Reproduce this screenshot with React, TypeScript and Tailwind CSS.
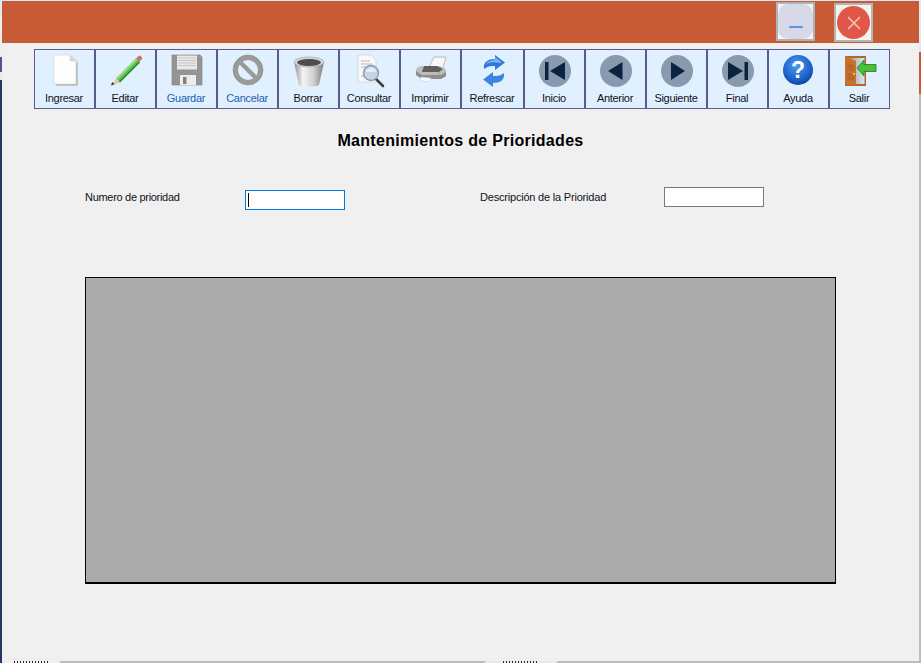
import React from 'react';

const Ic = ({ children }: { children: React.ReactNode }) => (
  <svg width="34" height="34" viewBox="0 0 34 34" className="mt-[4px] shrink-0">
    {children}
  </svg>
);

const DocIcon = () => (
  <Ic>
    <path d="M7 2h16l6 6v23H7z" fill="#b9b9b9" transform="translate(.8 .8)" />
    <path d="M6 1h16l6 6v23H6z" fill="#fdfdfd" stroke="#d4d4d4" strokeWidth=".6" />
    <path d="M22 1v6h6z" fill="#dcdcdc" stroke="#c4c4c4" strokeWidth=".5" />
  </Ic>
);

const PencilIcon = () => (
  <Ic>
    <path d="M7 24.5l20-20 4 4-20 20z" fill="#58b94e" />
    <path d="M7 24.5l20-20 1.6 1.6-20 20z" fill="#8fdc7c" />
    <path d="M10 27.5l20-20 1 1-20 20z" fill="#2b8a2f" />
    <path d="M7 24.5l4 4-8 2.500z" fill="#e6c79a" />
    <path d="M2 31.500l1.200-3.600 2.400 2.400z" fill="#333" />
    <path d="M27 4.500l2.500-2.500a1.500 1.500 0 0 1 2 0l1.200 1.200a1.500 1.500 0 0 1 0 2l-2.700 2.800z" fill="#c9746a" />
  </Ic>
);

const FloppyIcon = () => (
  <Ic>
    <path d="M2 1h28l2 2v28H2z" fill="#949494" stroke="#7c7c7c" strokeWidth=".6" />
    <rect x="7" y="1.500" width="20" height="14" fill="#e8e8e8" />
    <path d="M8 4h18M8 6.500h18M8 9h18M8 11.500h18" stroke="#c6c6c6" strokeWidth="1" />
    <rect x="10" y="21" width="16" height="10" fill="#ececec" />
    <rect x="13" y="23" width="3.500" height="7" fill="#808080" />
  </Ic>
);

const NoIcon = () => (
  <Ic>
    <circle cx="17" cy="16" r="12.500" fill="none" stroke="#9a9a9a" strokeWidth="5" />
    <path d="M8.500 7.500l17 17" stroke="#9a9a9a" strokeWidth="4.500" />
    <circle cx="17" cy="16" r="15" fill="none" stroke="#808080" strokeWidth=".5" />
  </Ic>
);

const TrashIcon = () => (
  <Ic>
    <defs>
      <linearGradient id="bin" x1="0" x2="1" y1="0" y2="0">
        <stop offset="0" stopColor="#8f8f8f" />
        <stop offset=".3" stopColor="#f4f4f4" />
        <stop offset=".65" stopColor="#d0d0d0" />
        <stop offset="1" stopColor="#7c7c7c" />
      </linearGradient>
    </defs>
    <path d="M2 8l5 23c2 2 18 2 20 0l5-23z" fill="url(#bin)" />
    <ellipse cx="17" cy="8" rx="15" ry="5" fill="#d8d8d8" stroke="#999" strokeWidth=".6" />
    <ellipse cx="17" cy="8.500" rx="12" ry="3.500" fill="#4d4d4d" />
  </Ic>
);

const SearchDocIcon = () => (
  <Ic>
    <path d="M5 1h13l5 5v22H5z" fill="#f8f8f8" stroke="#cfcfcf" strokeWidth=".7" />
    <path d="M8 7h9M8 10h12M8 13h5M8 22h3" stroke="#b8b8c4" strokeWidth="1" />
    <path d="M23 25l7 7" stroke="#3f3f3f" strokeWidth="2.600" strokeLinecap="round" />
    <circle cx="18" cy="19" r="7.500" fill="#bcd2ea" fillOpacity=".9" stroke="#8d9aa8" strokeWidth="1.400" />
    <path d="M13 18a5 4 0 0 1 10 0" fill="#e4eef9" />
  </Ic>
);

const PrinterIcon = () => (
  <Ic>
    <path d="M14 15l6-12h12l-4 14z" fill="#f8f8f8" stroke="#a4a4a4" strokeWidth=".7" />
    <path d="M2 16c1-3 3-4 7-4h14c3 0 7 1 9 4v6l-5 3H8l-6-4z" fill="#bdbdbd" />
    <path d="M10 12h13l6 3-4 3H8z" fill="#5f5f5f" />
    <path d="M2 17l6 4h19l5-3v4l-5 3H8l-6-4z" fill="#8d8d8d" />
    <path d="M7 23l10 1-2 4-9-1.500z" fill="#fafafa" stroke="#c4c4c4" strokeWidth=".5" />
    <circle cx="25" cy="19.500" r="1" fill="#5bd05b" />
  </Ic>
);

const RefreshIcon = () => (
  <Ic>
    <path d="M8 15c-1-7 4-10 11-10V1l10 7.500-10 7.500v-4c-5 0-8 .5-11 3z" fill="#2f78d8" />
    <path d="M28 19c1 7-4 10-11 10v4L7 25.500l10-7.500v4c5 0 8-.5 11-3z" fill="#3c86e2" />
    <path d="M10 10c2-3 5-4 9-4V3l7 5.500-3 .5c-4-1-9-1-13 1z" fill="#7db4f2" />
  </Ic>
);

const NavIcon = ({ glyph }: { glyph: 'first' | 'prev' | 'next' | 'last' }) => (
  <Ic>
    <circle cx="17" cy="17" r="16" fill="#8a9aae" />
    {glyph === 'first' && (
      <>
        <rect x="7" y="8" width="3.500" height="18" fill="#0a2340" />
        <path d="M27 8v18L12 17z" fill="#0a2340" />
      </>
    )}
    {glyph === 'prev' && <path d="M23.500 8v18L9 17z" fill="#0a2340" />}
    {glyph === 'next' && <path d="M11 8v18l14-9z" fill="#0a2340" />}
    {glyph === 'last' && (
      <>
        <path d="M7 8v18l15-9z" fill="#0a2340" />
        <rect x="23.500" y="8" width="3.500" height="18" fill="#0a2340" />
      </>
    )}
  </Ic>
);

const HelpIcon = () => (
  <Ic>
    <defs>
      <radialGradient id="help" cx=".45" cy=".35" r=".7">
        <stop offset="0" stopColor="#4f9cf0" />
        <stop offset=".7" stopColor="#1a5fc8" />
        <stop offset="1" stopColor="#0c3a8e" />
      </radialGradient>
    </defs>
    <circle cx="16" cy="16" r="15" fill="url(#help)" />
    <text x="16" y="24" textAnchor="middle" fontFamily="'Liberation Sans', sans-serif" fontWeight="700" fontSize="23" fill="#fff">
      ?
    </text>
  </Ic>
);

const ExitIcon = () => (
  <Ic>
    <defs>
      <linearGradient id="room" x1="0" x2="1" y1="0" y2="0">
        <stop offset="0" stopColor="#8f9ca4" />
        <stop offset="1" stopColor="#e2e8ea" />
      </linearGradient>
    </defs>
    <path d="M2 2h21v30H2z" fill="#b5662c" />
    <path d="M5 4h16.500v26H5z" fill="url(#room)" />
    <path d="M2 2l11 5v25l-11-2z" fill="#c8712c" />
    <path d="M4 9l7 2.500v6l-7-1.500zM4 19l7 1v7l-7-1.500z" fill="#b9662a" />
    <circle cx="11" cy="20" r=".9" fill="#f0d890" />
    <path d="M14 14l7-8v4.500h12v7H21v4.500z" fill="#48c038" stroke="#1f7a1f" strokeWidth=".8" />
  </Ic>
);

const tools = [
  { label: 'Ingresar', w: 'w-[61px]', icon: <DocIcon /> },
  { label: 'Editar', w: 'w-[61px]', icon: <PencilIcon /> },
  { label: 'Guardar', w: 'w-[61px]', icon: <FloppyIcon />, off: true },
  { label: 'Cancelar', w: 'w-[61px]', icon: <NoIcon />, off: true },
  { label: 'Borrar', w: 'w-[61px]', icon: <TrashIcon /> },
  { label: 'Consultar', w: 'w-[61px]', icon: <SearchDocIcon /> },
  { label: 'Imprimir', w: 'w-[61px]', icon: <PrinterIcon /> },
  { label: 'Refrescar', w: 'w-[63px]', icon: <RefreshIcon /> },
  { label: 'Inicio', w: 'w-[61px]', icon: <NavIcon glyph="first" /> },
  { label: 'Anterior', w: 'w-[61px]', icon: <NavIcon glyph="prev" /> },
  { label: 'Siguiente', w: 'w-[61px]', icon: <NavIcon glyph="next" /> },
  { label: 'Final', w: 'w-[61px]', icon: <NavIcon glyph="last" /> },
  { label: 'Ayuda', w: 'w-[61px]', icon: <HelpIcon /> },
  { label: 'Salir', w: 'w-[61px]', icon: <ExitIcon /> },
];

export default function App() {
  return (
    <div className="w-[921px] h-[663px] overflow-hidden flex flex-col bg-[#bdbdbd] font-['Liberation_Sans',Arial,sans-serif] text-[11px] text-[#10101c]">
      <div className="flex h-[661px]">
        {/* what shows of the desktop on the left */}
        <div className="w-[2px] flex flex-col">
          <div className="h-[15px] bg-[#dfe6f5]" />
          <div className="h-[42px] bg-[#eeeeee]" />
          <div className="h-[15px] bg-[#6a4a86]" />
          <div className="h-[8px] bg-[#e8e8e8]" />
          <div className="flex-1 bg-[#23395f]" />
        </div>

        <div className="w-[917px] flex flex-col bg-[#f0f0f0]">
          <div className="h-[1px] bg-[#dfe6f5]" />
          <div className="h-[42px] bg-[#c95a36] flex justify-end items-start gap-[19px] pr-[46px]">
            <button className="w-[39px] h-[39px] mt-[1px] border-2 border-[#aeb4b4] bg-[#f4f4f6] flex items-center justify-center">
              <span className="w-[35px] h-[35px] rounded-[10px] bg-[#d8d9e8] flex items-end justify-center pb-[11px]">
                <span className="w-[14px] h-[2px] rounded-full bg-[#5b94e0]" />
              </span>
            </button>
            <button className="w-[39px] h-[39px] mt-[2px] border-2 border-[#b4b6b4] bg-[#f5f3ee] flex items-center justify-center">
              <span className="w-[33px] h-[33px] rounded-full bg-[#e0574a] flex items-center justify-center">
                <svg width="16" height="16" viewBox="0 0 16 16">
                  <path d="M2 2l12 12M14 2L2 14" stroke="#f6c8bc" strokeWidth="1.500" />
                </svg>
              </span>
            </button>
          </div>

          <div className="flex mt-[6px] ml-[32px]">
            {tools.map((t) => (
              <button
                key={t.label}
                className={`${t.w} h-[60px] border border-[#5a5a8c] bg-[#e0f0ff] flex flex-col items-center ${t.off ? 'text-[#1a62b0]' : ''}`}
              >
                {t.icon}
                <span className="mt-[4px] pr-[1px] leading-[13px] tracking-[-0.3px] whitespace-nowrap">{t.label}</span>
              </button>
            ))}
          </div>

          <h1 className="mt-[22px] h-[20px] text-center text-[16px] leading-[20px] tracking-[0.3px] font-bold text-black">
            Mantenimientos de Prioridades
          </h1>

          <div className="flex items-start mt-[36px] ml-[83px] h-[23px]">
            <label className="w-[160px] mt-[3px] leading-[14px] tracking-[-0.3px]">Numero de prioridad</label>
            <div className="w-[100px] h-[20px] mt-[3px] border border-[#0078d7] bg-white flex items-center pl-[2px]">
              <span className="w-[1px] h-[14px] bg-black" />
            </div>
            <label className="w-[184px] ml-[135px] mt-[3px] leading-[14px] tracking-[-0.2px]">Descripción de la Prioridad</label>
            <input className="w-[100px] h-[20px] border border-[#7a7a7a] bg-white" />
          </div>

          <div className="mt-[67px] ml-[83px] w-[751px] h-[307px] bg-[#ababab] border border-black border-b-2" />
        </div>

        {/* desktop again on the right */}
        <div className="w-[2px] flex flex-col">
          <div className="h-[52px] bg-[#dfe6f5]" />
          <div className="h-[42px] bg-[#c95a36]" />
          <div className="flex-1 bg-[#bdbdbd]" />
        </div>
      </div>

      <div className="h-[2px] flex">
        <div className="w-[2px] bg-[#23395f]" />
        <div className="w-[12px] bg-[#f0f0f0]" />
        <div className="w-[36px] bg-[repeating-linear-gradient(90deg,#2a2a3a_0_1px,#f0f0f0_1px_3px)]" />
        <div className="w-[10px] bg-[#f0f0f0]" />
        <div className="w-[420px] bg-[#bdbdbd]" />
        <div className="w-[18px] ml-[5px] bg-[#e8e8e8]" />
        <div className="w-[34px] bg-[repeating-linear-gradient(90deg,#2a2a3a_0_1px,#e8e8e8_1px_3px)]" />
        <div className="w-[20px] bg-[#e8e8e8]" />
      </div>
    </div>
  );
}
